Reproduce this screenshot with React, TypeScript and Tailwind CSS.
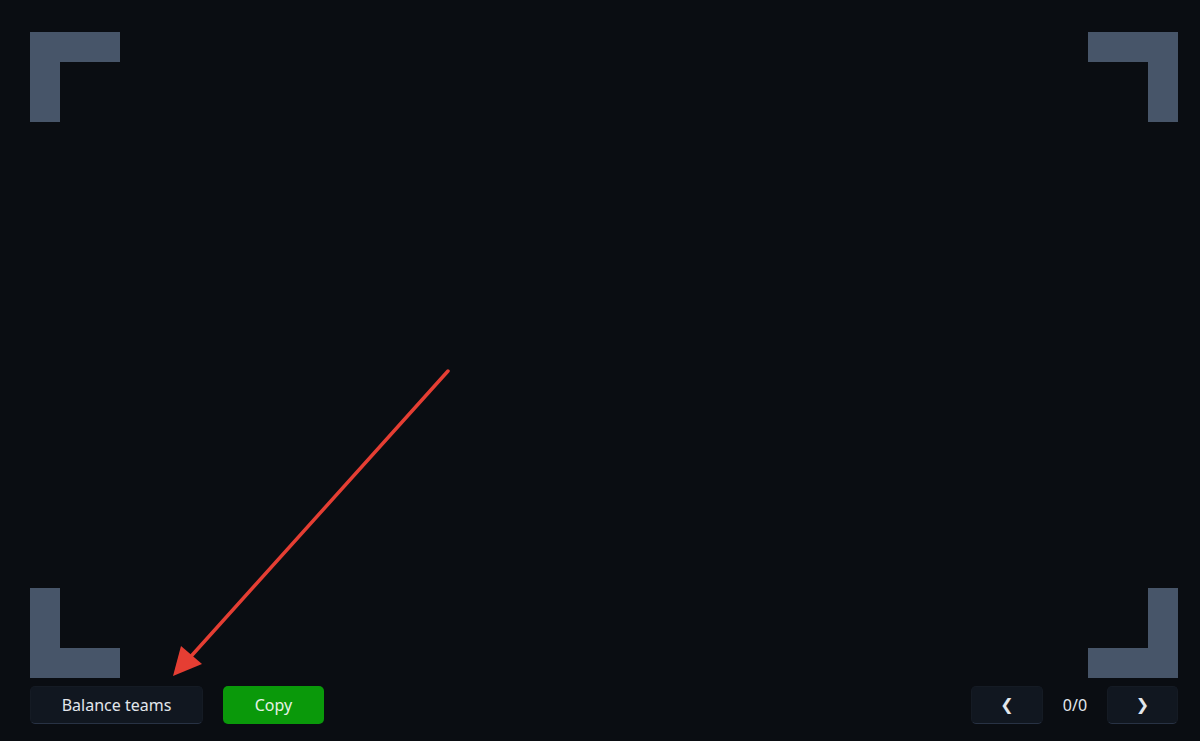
import React from "react";

function Corner({ pos }: { pos: "tl" | "tr" | "bl" | "br" }) {
  const sides = {
    tl: "border-l-[30px] border-t-[30px]",
    tr: "border-r-[30px] border-t-[30px]",
    bl: "border-l-[30px] border-b-[30px]",
    br: "border-r-[30px] border-b-[30px]",
  }[pos];
  return <div className={`w-[90px] h-[90px] border-[#475569] ${sides}`} />;
}

function ToolButton({ children, className = "" }: { children: React.ReactNode; className?: string }) {
  return (
    <button
      className={`h-[38px] rounded-[5px] border border-[#151b24] border-b-[#283244] bg-[#111720] text-[#e2e6ec] text-[16px] flex items-center justify-center ${className}`}
    >
      {children}
    </button>
  );
}

export default function App() {
  return (
    <div
      className="relative h-[741px] w-full bg-[#0a0d12] flex flex-col overflow-hidden"
      style={{ fontFamily: '"Noto Sans", "Open Sans", sans-serif' }}
    >
      <div className="flex-1 flex flex-col justify-between px-[22px] pt-[32px] pl-[30px]">
        <div className="flex justify-between">
          <Corner pos="tl" />
          <Corner pos="tr" />
        </div>
        <div className="flex justify-between">
          <Corner pos="bl" />
          <Corner pos="br" />
        </div>
      </div>

      <div className="flex items-center mt-[8px] mb-[17px] pl-[30px] pr-[22px]">
        <ToolButton className="w-[173px]">Balance teams</ToolButton>
        <button className="ml-[20px] h-[38px] w-[101px] rounded-[5px] bg-[#0a990a] text-[#e6f2e6] text-[16px]">
          Copy
        </button>
        <div className="ml-auto flex items-center">
          <ToolButton className="w-[72px] text-[15px]">
            <span style={{ fontFamily: '"DejaVu Sans", sans-serif' }}>❮</span>
          </ToolButton>
          <span className="w-[64px] text-center text-[16px] text-[#e2e6ec]">0/0</span>
          <ToolButton className="w-[71px] text-[15px]">
            <span style={{ fontFamily: '"DejaVu Sans", sans-serif' }}>❯</span>
          </ToolButton>
        </div>
      </div>

      <svg className="absolute inset-0 pointer-events-none" width="1200" height="741" viewBox="0 0 1200 741">
        <line x1="448" y1="371" x2="185" y2="663" stroke="#e53e33" strokeWidth="3.5" strokeLinecap="round" />
        <polygon points="173,676 181,646 202,664" fill="#e53e33" />
      </svg>
    </div>
  );
}
